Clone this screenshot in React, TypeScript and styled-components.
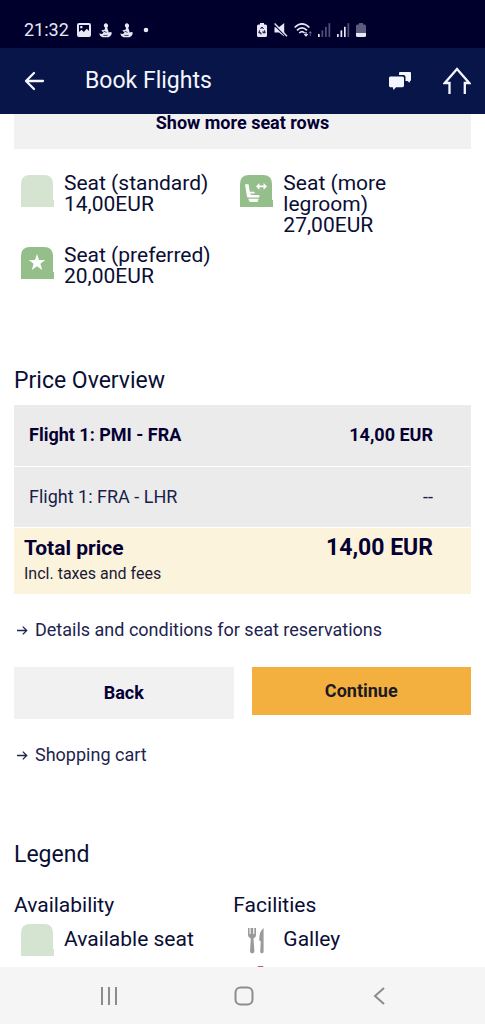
import React from "react";
import styled, { createGlobalStyle } from "styled-components";

const GlobalStyle = createGlobalStyle`
  * { box-sizing: border-box; }
  body { margin: 0; background: #fff; }
  button { font: inherit; color: inherit; border: 0; padding: 0; background: none; }
  h1, h2, h3, p { margin: 0; font-weight: 400; }
  svg { display: block; flex: none; }
`;

const Screen = styled.div`
  height: 100vh;
  display: flex;
  flex-direction: column;
  font-family: Roboto, "Liberation Sans", sans-serif;
  color: #0a0e35;
`;

const StatusBar = styled.div`
  flex: none;
  height: 48px;
  padding: 12px 24px 0;
  display: flex;
  align-items: flex-start;
  background: #00002d;
  color: #e8e6f7;
  font-size: 18px;
  line-height: 36px;
`;

const StatusGroup = styled.div<{ $width: string; $gap: number }>`
  width: ${(p) => p.$width};
  height: 36px;
  display: flex;
  align-items: center;
  gap: ${(p) => p.$gap}px;
`;

const AppBar = styled.header`
  flex: none;
  height: 66px;
  padding: 0 14px 0 24px;
  display: flex;
  align-items: center;
  background: #081549;
  color: #f4f6ff;
`;

const Title = styled.h1`
  flex: 1;
  padding-left: 40px;
  font-size: 23px;
  line-height: 32px;
`;

const IconButton = styled.button`
  display: flex;
  align-items: center;
  justify-content: center;
`;

const AppActions = styled.div`
  display: flex;
  align-items: center;
  gap: 31px;
`;

const Content = styled.main`
  flex: 1;
  min-height: 0;
  overflow: hidden;
  padding: 0 14px;
`;

const Action = styled.button<{ $primary?: boolean }>`
  width: 100%;
  height: ${(p) => (p.$primary ? 48 : 52)}px;
  background: ${(p) => (p.$primary ? "#f3b03e" : "#f1f1f1")};
  color: ${(p) => (p.$primary ? "#1d1a26" : "#050033")};
  font-size: 18px;
  line-height: 24px;
  font-weight: 700;
`;

const ScrolledTop = styled.div`
  margin-top: -17px;
`;

const Columns = styled.div`
  display: grid;
  grid-template-columns: 48% 48%;
  row-gap: 9px;
`;

const SeatPrices = styled(Columns)`
  padding-top: 24px;
`;

const LegendItem = styled.div<{ $center?: boolean }>`
  display: flex;
  align-items: ${(p) => (p.$center ? "center" : "flex-start")};
  gap: 9px;
  padding-left: 7px;
  font-size: 21px;
  line-height: 21px;
`;

const IconSlot = styled.span`
  flex: none;
  width: 34px;
  height: 34px;
  padding-top: 2px;
`;

const Heading = styled.h2`
  font-size: 23px;
  line-height: 32px;
`;

const PriceSection = styled.section`
  padding-top: 78px;
`;

const PriceTable = styled.table`
  width: 100%;
  margin-top: 8px;
  border-collapse: collapse;
  font-size: 18px;
  line-height: 24px;
`;

const PriceRow = styled.tr<{ $bold?: boolean }>`
  height: 61px;
  background: #ebebeb;
  border-bottom: 1px solid #fff;
  font-weight: ${(p) => (p.$bold ? 700 : 400)};
  color: ${(p) => (p.$bold ? "#050033" : "#1a1f4a")};
`;

const RowLabel = styled.th`
  padding: 0 0 0 15px;
  text-align: left;
  font-weight: inherit;
`;

const RowPrice = styled.td`
  padding: 0 38px 0 0;
  text-align: right;
`;

const TotalRow = styled.tr`
  height: 67px;
  background: #fcf3dc;
  color: #050033;
  vertical-align: top;
`;

const TotalLabel = styled.th`
  padding: 7px 0 0 10px;
  text-align: left;
  font-size: 21px;
  line-height: 26px;
`;

const TotalNote = styled.span`
  display: block;
  font-size: 16px;
  font-weight: 400;
  color: #1a1a35;
`;

const TotalPrice = styled.td`
  padding: 7px 38px 0 0;
  text-align: right;
  font-size: 23px;
  line-height: 26px;
  font-weight: 700;
`;

const ArrowLink = styled.a`
  display: flex;
  align-items: center;
  gap: 7px;
  padding-left: 2px;
  font-size: 18px;
  line-height: 24px;
  color: #1d2450;
  text-decoration: none;
`;

const LinkRow = styled.div`
  padding: 24px 0 25px;
`;

const Buttons = styled.div`
  display: grid;
  grid-template-columns: 1fr 1fr;
  column-gap: 18px;
  align-items: start;
`;

const LegendSection = styled.section`
  padding-top: 47px;
`;

const LegendColumns = styled(Columns)`
  padding-top: 20px;
`;

const LegendHeading = styled.h3`
  font-size: 21px;
  line-height: 28px;
`;

const LegendList = styled.div`
  display: flex;
  flex-direction: column;
  gap: 3px;
`;

const NavBar = styled.nav`
  flex: none;
  height: 57px;
  padding-left: 3px;
  display: grid;
  grid-template-columns: 28% 28% 28%;
  justify-content: center;
  background: #f5f5f5;
  color: #8c8c8c;
`;

const SeatIcon = ({ color, children }: { color: string; children?: React.ReactNode }) => (
  <svg width="34" height="32" viewBox="0 0 34 32" aria-hidden="true">
    <path d="M0 32V9Q0 0 9 0H23Q32 0 32 9V25H33V32Z" fill={color} />
    {children}
  </svg>
);

const SmallArrow = () => (
  <svg width="12" height="12" viewBox="0 0 12 12" fill="none" stroke="currentColor" strokeWidth="1.3" aria-hidden="true">
    <path d="M1 6.5H10.5M6.8 2.6L10.7 6.5L6.8 10.4" />
  </svg>
);

const Mascot = () => (
  <svg width="13" height="15" viewBox="0 0 13 15" fill="currentColor" aria-hidden="true">
    <path d="M5 1.5Q6.8 -.8 8.6 1.2Q9.8 3 8.2 4.8L9.2 7.4L9.6 9.6L11.2 9L12.8 9.6Q12.6 13.4 9.4 14.3H3.6Q.6 13.4 .2 10.6L3 10.9L4.6 9.6L2.2 7.6L5.8 6.4L6 4.6Q4.4 3.4 5 1.5Z" />
    <path d="M4.6 8.2L7.6 9.4M4.4 12.4H8.6" stroke="#00002d" strokeWidth=".7" />
  </svg>
);

const Signal = ({ level }: { level: number }) => (
  <svg width="13" height="14" viewBox="0 0 13 14" fill="currentColor" aria-hidden="true">
    {[0, 1, 2, 3].map((i) => (
      <rect key={i} x={i * 3.5} y={11 - i * 3.6} width="1.7" height={3 + i * 3.6} opacity={i < level ? 1 : 0.35} />
    ))}
  </svg>
);

export default function App() {
  return (
    <Screen>
      <GlobalStyle />
      <StatusBar>
        <StatusGroup $width="53%" $gap={8}>
          <span>21:32</span>
          <svg width="14" height="14" viewBox="0 0 14 14" aria-hidden="true">
            <path fillRule="evenodd" fill="currentColor" d="M2 0H12Q14 0 14 2V12Q14 14 12 14H2Q0 14 0 12V2Q0 0 2 0ZM2 2V9L4.5 6.8L6.8 9L9.8 5.8L12 8V2ZM3.2 3H5.4V5.2H3.2Z" />
          </svg>
          <Mascot />
          <Mascot />
          <svg width="16" height="6" viewBox="0 0 16 6" aria-hidden="true">
            <circle cx="5" cy="3" r="2.3" fill="currentColor" />
          </svg>
        </StatusGroup>
        <StatusGroup $width="47%" $gap={6}>
          <svg width="12" height="14" viewBox="-1 0 12 14" aria-hidden="true">
            <path d="M3 0H7V1.5H8.5Q10 1.5 10 3V12.5Q10 14 8.5 14H1.5Q0 14 0 12.5V3Q0 1.5 1.5 1.5H3Z" fill="currentColor" />
            <path d="M3.5 6L5 4L6.5 6M7.3 7.3L8.2 9.8H6M4 9.8H1.8L2.7 7.3M4 9.8V11.5M6 9.8V8.2" fill="none" stroke="#00002d" strokeWidth="1" />
          </svg>
          <svg width="14" height="14" viewBox="0 0 14 14" aria-hidden="true">
            <path d="M.5 4.2H5L10.2 0V13.5L5 9.5H.5Z" fill="currentColor" />
            <path d="M0 1.6L12 13.6" stroke="#00002d" strokeWidth="1.4" />
            <path d="M.6 .6L13 13.2" stroke="currentColor" strokeWidth="1.4" />
          </svg>
          <svg width="18" height="14" viewBox="0 0 18 14" fill="none" stroke="currentColor" strokeWidth="1.7" aria-hidden="true">
            <path d="M.6 4.5Q8 -2.6 15.4 4.5M3 7.3Q8 2.6 13 7.3M5.3 10Q8 7.4 10.6 10" />
            <path d="M12 9V13M10.3 11.2L12 13L13.7 11.2" strokeWidth="1.2" />
            <path d="M16.3 13V8.7M14.9 10.2L16.3 8.7L17.7 10.2" strokeWidth="1" opacity=".4" />
          </svg>
          <Signal level={1} />
          <Signal level={3} />
          <svg width="10" height="14" viewBox="0 0 10 14" aria-hidden="true">
            <path d="M3 0H7V1.5H8.5Q10 1.5 10 3V10H0V3Q0 1.5 1.5 1.5H3Z" fill="currentColor" opacity=".4" />
            <path d="M0 10H10V12.5Q10 14 8.5 14H1.5Q0 14 0 12.5Z" fill="currentColor" />
          </svg>
        </StatusGroup>
      </StatusBar>

      <AppBar>
        <IconButton aria-label="Go back">
          <svg width="21" height="20" viewBox="0 0 21 20" fill="none" stroke="currentColor" strokeWidth="2.3" strokeLinecap="round" strokeLinejoin="round">
            <path d="M19 10H2.5M10 2L2 10L10 18" />
          </svg>
        </IconButton>
        <Title>Book Flights</Title>
        <AppActions>
          <IconButton aria-label="Chat">
            <svg width="24" height="20" viewBox="0 0 24 20" fill="currentColor">
              <path d="M12 1H22Q23 1 23 2V9Q23 10 22 10L21.5 11.7L19.5 10H17.5V6Q17.5 4 15.5 4H11V2Q11 1 12 1Z" />
              <path d="M2.3 5.5H14.5Q16 5.5 16 7V14.8Q16 16.2 14.5 16.2H8L5.5 19L4.8 16.2H2.3Q1 16.2 1 14.8V7Q1 5.5 2.3 5.5Z" />
            </svg>
          </IconButton>
          <IconButton aria-label="Home">
            <svg width="28" height="28" viewBox="0 0 28 28" fill="none" stroke="currentColor" strokeWidth="2.3">
              <path d="M6.5 27V16H1.8L14 2L26.2 16H21.8V27" />
            </svg>
          </IconButton>
        </AppActions>
      </AppBar>

      <Content>
        <ScrolledTop>
          <Action>Show more seat rows</Action>
        </ScrolledTop>

        <SeatPrices>
          <LegendItem>
            <IconSlot><SeatIcon color="#d5e4d1" /></IconSlot>
            <p>Seat (standard)<br />14,00EUR</p>
          </LegendItem>
          <LegendItem>
            <IconSlot>
              <SeatIcon color="#94bf8a">
                <g fill="#fff">
                  <path d="M5 9.2H8.6L9.8 16.8H14.6V18.6H10.4L10.8 20H18.2Q19.6 20 19.6 21.3Q19.6 22.6 18.2 22.6H8.2Q7.2 22.6 7 21.6Z" />
                  <path d="M8.6 23.8H18.8L17.4 27H9.6V25.6H8.6Z" />
                  <path d="M16 11.4L19.4 8V10.6H23.6V8L27 11.4L23.6 14.8V12.2H19.4V14.8Z" />
                </g>
              </SeatIcon>
            </IconSlot>
            <p>Seat (more legroom)<br />27,00EUR</p>
          </LegendItem>
          <LegendItem>
            <IconSlot>
              <SeatIcon color="#94bf8a">
                <path fill="#fff" d="M16 7L18.1 13H24.3L19.4 16.8L21.2 23L16 19.3L10.8 23L12.6 16.8L7.7 13H13.9Z" />
              </SeatIcon>
            </IconSlot>
            <p>Seat (preferred)<br />20,00EUR</p>
          </LegendItem>
        </SeatPrices>

        <PriceSection>
          <Heading>Price Overview</Heading>
          <PriceTable>
            <tbody>
              <PriceRow $bold>
                <RowLabel scope="row">Flight 1: PMI - FRA</RowLabel>
                <RowPrice>14,00 EUR</RowPrice>
              </PriceRow>
              <PriceRow>
                <RowLabel scope="row">Flight 1: FRA - LHR</RowLabel>
                <RowPrice>--</RowPrice>
              </PriceRow>
              <TotalRow>
                <TotalLabel scope="row">
                  Total price
                  <TotalNote>Incl. taxes and fees</TotalNote>
                </TotalLabel>
                <TotalPrice>14,00 EUR</TotalPrice>
              </TotalRow>
            </tbody>
          </PriceTable>
        </PriceSection>

        <LinkRow>
          <ArrowLink href="#conditions"><SmallArrow />Details and conditions for seat reservations</ArrowLink>
        </LinkRow>
        <Buttons>
          <Action>Back</Action>
          <Action $primary>Continue</Action>
        </Buttons>
        <LinkRow>
          <ArrowLink href="#cart"><SmallArrow />Shopping cart</ArrowLink>
        </LinkRow>

        <LegendSection>
          <Heading>Legend</Heading>
          <LegendColumns>
            <LegendList>
              <LegendHeading>Availability</LegendHeading>
              <LegendItem $center>
                <IconSlot><SeatIcon color="#d5e4d1" /></IconSlot>
                <p>Available seat</p>
              </LegendItem>
            </LegendList>
            <LegendList>
              <LegendHeading>Facilities</LegendHeading>
              <LegendItem $center>
                <IconSlot>
                  <svg width="34" height="32" viewBox="0 0 34 32" fill="#9a9a9a" aria-hidden="true">
                    <path d="M8 4H9.5V10H10.6V4H13.2V10H14.3V4H16V11Q16 13.6 13.5 14.6L14.4 27Q14.4 29.4 12.2 29.4Q10 29.4 10 27L10.8 14.6Q8 13.6 8 11Z" />
                    <path d="M23.6 4V27.6Q23.6 29.4 22 29.4Q20.2 29.4 20.2 27.6L20.8 17.6L19.2 16.2Q19.2 7 23.6 4Z" />
                  </svg>
                </IconSlot>
                <p>Galley</p>
              </LegendItem>
              <LegendItem>
                <IconSlot>
                  <svg width="34" height="32" viewBox="0 0 34 32" fill="#c0625c" aria-hidden="true">
                    <path d="M18 5H23L30 16H24V32H17V16H11Z" />
                  </svg>
                </IconSlot>
              </LegendItem>
            </LegendList>
          </LegendColumns>
        </LegendSection>
      </Content>

      <NavBar>
        <IconButton aria-label="Recent apps">
          <svg width="18" height="18" viewBox="0 0 18 18" stroke="currentColor" strokeWidth="2">
            <path d="M2 0V18M9 0V18M16 0V18" />
          </svg>
        </IconButton>
        <IconButton aria-label="Home screen">
          <svg width="20" height="20" viewBox="0 0 20 20" fill="none" stroke="currentColor" strokeWidth="2">
            <rect x="1.5" y="1.5" width="17" height="17" rx="5" />
          </svg>
        </IconButton>
        <IconButton aria-label="Back">
          <svg width="12" height="18" viewBox="0 0 12 18" fill="none" stroke="currentColor" strokeWidth="2">
            <path d="M11 1L2 9L11 17" />
          </svg>
        </IconButton>
      </NavBar>
    </Screen>
  );
}
